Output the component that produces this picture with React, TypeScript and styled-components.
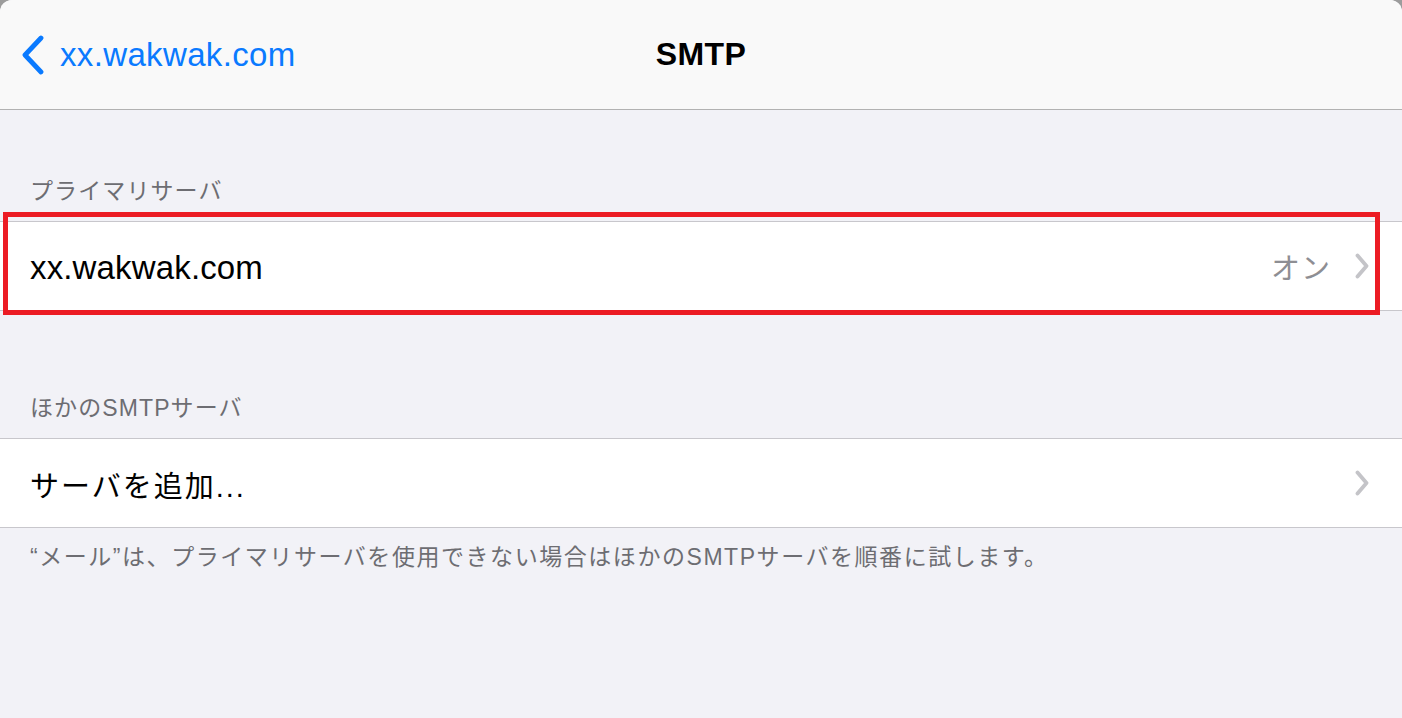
import React from "react";
import styled, { createGlobalStyle } from "styled-components";

const GlobalStyle = createGlobalStyle`
  html, body {
    margin: 0;
    padding: 0;
    background: #9c9c9c;
  }
  body {
    font-family: "Liberation Sans", "Noto Sans CJK JP", sans-serif;
    -webkit-font-smoothing: antialiased;
  }
`;

const Screen = styled.div`
  width: 1402px;
  height: 718px;
  background: #f2f2f7;
  border-radius: 12px 12px 0 0;
  overflow: hidden;
  display: flex;
  flex-direction: column;
`;

const NavBar = styled.header`
  height: 109px;
  flex: 0 0 auto;
  background: #f9f9f9;
  border-bottom: 1px solid #b2b2b2;
  display: grid;
  grid-template-columns: 1fr auto 1fr;
  align-items: center;
`;

const BackButton = styled.div`
  display: flex;
  align-items: center;
  gap: 15px;
  padding-left: 21px;
  color: #0a7aff;
  font-size: 33px;
  letter-spacing: 0.35px;
`;

const Title = styled.div`
  font-size: 32px;
  font-weight: 700;
  color: #000;
  letter-spacing: 0.4px;
`;

const SectionHeader = styled.div<{ $top: number }>`
  padding: ${(p) => p.$top}px 30px 16px;
  font-size: 23px;
  line-height: 28px;
  color: #6d6d72;
  letter-spacing: 1.1px;
`;

const RowWrap = styled.div`
  position: relative;
`;

const Row = styled.div`
  height: 88px;
  background: #fff;
  border-top: 1px solid #c8c7cc;
  border-bottom: 1px solid #c8c7cc;
  display: flex;
  align-items: center;
  padding: 0 33px 0 30px;
`;

const RowLabel = styled.div`
  flex: 1;
  font-size: 33px;
  color: #000;
  letter-spacing: 0.15px;
  margin-top: 4px;
`;

const JpLabel = styled(RowLabel)`
  font-size: 29px;
  letter-spacing: 2px;
  margin-top: 2px;
`;

const RowValue = styled.div`
  font-size: 29px;
  color: #8e8e93;
  margin-right: 24px;
  letter-spacing: 1px;
`;

const Highlight = styled.div`
  position: absolute;
  left: 3px;
  right: 22px;
  top: -9px;
  bottom: -4px;
  border: 5px solid #ec1c24;
  pointer-events: none;
`;

const Footer = styled.div`
  padding: 15px 30px 0;
  font-size: 23px;
  line-height: 28px;
  color: #6d6d72;
  letter-spacing: 1.55px;
`;

const BackChevron = () => (
  <svg width="24" height="40" viewBox="0 0 24 40">
    <polyline
      points="20,3 4,20 20,37"
      fill="none"
      stroke="#0a7aff"
      strokeWidth="4.8"
      strokeLinecap="round"
      strokeLinejoin="round"
    />
  </svg>
);

const Chevron = () => (
  <svg width="14" height="26" viewBox="0 0 14 26">
    <polyline
      points="2.5,2.5 11.5,13 2.5,23.5"
      fill="none"
      stroke="#c4c4c8"
      strokeWidth="3.8"
      strokeLinecap="round"
      strokeLinejoin="round"
    />
  </svg>
);

export default function App() {
  return (
    <>
      <GlobalStyle />
      <Screen>
        <NavBar>
          <BackButton>
            <BackChevron />
            <span>xx.wakwak.com</span>
          </BackButton>
          <Title>SMTP</Title>
          <div />
        </NavBar>

        <SectionHeader $top={67}>プライマリサーバ</SectionHeader>
        <RowWrap>
          <Row>
            <RowLabel>xx.wakwak.com</RowLabel>
            <RowValue>オン</RowValue>
            <Chevron />
          </Row>
          <Highlight />
        </RowWrap>

        <SectionHeader $top={83}>ほかのSMTPサーバ</SectionHeader>
        <Row>
          <JpLabel>サーバを追加...</JpLabel>
          <Chevron />
        </Row>
        <Footer>“メール”は、プライマリサーバを使用できない場合はほかのSMTPサーバを順番に試します。</Footer>
      </Screen>
    </>
  );
}
